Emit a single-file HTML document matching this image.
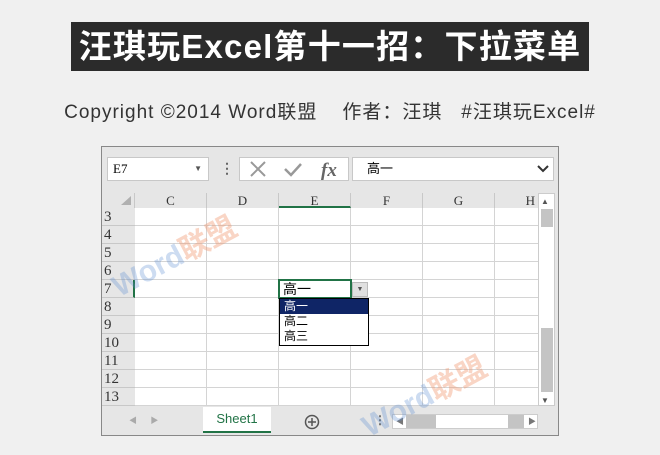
<!DOCTYPE html>
<html><head><meta charset="utf-8"><style>
*{margin:0;padding:0;box-sizing:border-box}
body{width:660px;height:455px;background:#f0f0f0;position:relative;overflow:hidden;font-family:"Liberation Sans","Noto Sans CJK SC",sans-serif}
.a{position:absolute}
.title{left:71px;top:22px;width:518px;height:49px;background:#2b2b2b;color:#fff;font-weight:bold;font-size:33px;line-height:49px;text-align:center;white-space:nowrap;letter-spacing:1.2px}
.sub{left:0;top:97px;width:660px;text-align:center;font-size:19px;color:#333;white-space:nowrap;letter-spacing:1px}
.win{left:101px;top:146px;width:458px;height:290px;background:#e6e6e6;border:1px solid #888}
.box{background:#fff;border:1px solid #c8c8c8}
.mono{font-family:"Liberation Serif","Noto Serif CJK SC",serif}
.hc{top:193px;height:15px;background:#e6e6e6;font-size:13px;text-align:center;line-height:15px;border-right:1px solid #c8c8c8;font-family:"Liberation Serif",serif;color:#333}
.rh{left:102px;width:33px;height:18px;font-size:15px;line-height:18px;padding-left:2px;background:#e6e6e6;border-bottom:1px solid #c8c8c8;font-family:"Liberation Serif",serif;color:#333}
.wm{font-weight:bold;color:rgba(90,140,210,.3);font-size:30px;transform:rotate(-28deg);white-space:nowrap}
.wm span{color:rgba(240,150,110,.4)}
</style></head><body>
<div class="a title">汪琪玩Excel第十一招：下拉菜单</div>
<div class="a sub">Copyright ©2014 Word联盟&nbsp;&nbsp;&nbsp;&nbsp;作者：汪琪&nbsp;&nbsp;&nbsp;#汪琪玩Excel#</div>
<div class="a win"></div>
<div class="a box" style="left:107px;top:157px;width:102px;height:24px;font-size:13px;line-height:22px;padding-left:5px"><span class="mono">E7</span><span class="a" style="right:6px;top:0;font-size:8px;color:#555">▼</span></div>
<div class="a" style="left:220px;top:160px;color:#666;font-size:14px;font-weight:bold">⋮</div>
<div class="a box" style="left:239px;top:157px;width:110px;height:24px"></div>
<svg class="a" style="left:239px;top:157px" width="110" height="24"><path d="M12 5l14 14M26 5L12 19" stroke="#999" stroke-width="2" fill="none"/><path d="M46 12l6 6 10-11" stroke="#999" stroke-width="2.5" fill="none"/><text x="82" y="19" font-family="Liberation Serif" font-style="italic" font-weight="bold" font-size="19" fill="#666">fx</text></svg>
<div class="a box" style="left:352px;top:157px;width:202px;height:24px;font-size:13px;line-height:22px;padding-left:14px">高一<svg class="a" style="right:4px;top:7px" width="12" height="8"><path d="M1 1l5 5 5-5" stroke="#333" stroke-width="2" fill="none"/></svg></div>
<div class="a" style="left:135px;top:208px;width:403px;height:198px;background:#fff;
background-image:linear-gradient(#d4d4d4 1px,transparent 1px),linear-gradient(90deg,#d4d4d4 1px,transparent 1px);background-size:100% 18px,72px 100%;background-position:0 17px,71px 0"></div>
<div class="a" style="left:102px;top:193px;width:33px;height:15px;background:#e6e6e6;border-right:1px solid #c8c8c8"></div>
<svg class="a" style="left:120px;top:196px" width="12" height="10"><path d="M11 0L11 9 1 9z" fill="#b0b0b0"/></svg>
<div class="a hc" style="left:135px;width:72px">C</div>
<div class="a hc" style="left:207px;width:72px">D</div>
<div class="a hc" style="left:279px;width:72px;border-bottom:2px solid #217346">E</div>
<div class="a hc" style="left:351px;width:72px">F</div>
<div class="a hc" style="left:423px;width:72px">G</div>
<div class="a hc" style="left:495px;width:43px;text-align:right;padding-right:3px;border:none">H</div>
<div class="a rh" style="top:208px">3</div><div class="a rh" style="top:226px">4</div><div class="a rh" style="top:244px">5</div><div class="a rh" style="top:262px">6</div><div class="a rh" style="top:280px;border-right:2px solid #217346">7</div><div class="a rh" style="top:298px">8</div><div class="a rh" style="top:316px">9</div><div class="a rh" style="top:334px">10</div><div class="a rh" style="top:352px">11</div><div class="a rh" style="top:370px">12</div><div class="a rh" style="top:388px">13</div>
<div class="a" style="left:538px;top:193px;width:17px;height:213px;background:#fff;border:1px solid #ccc"></div>
<div class="a" style="left:541px;top:197px;font-size:8px;color:#555">▲</div>
<div class="a" style="left:541px;top:209px;width:12px;height:18px;background:#c4c4c4"></div>
<div class="a" style="left:541px;top:328px;width:12px;height:64px;background:#c4c4c4"></div>
<div class="a" style="left:541px;top:396px;font-size:8px;color:#555">▼</div>
<div class="a" style="left:278px;top:279px;width:74px;height:20px;border:2px solid #217346;background:#fff;font-size:14px;line-height:16px;padding-left:3px">高一</div>
<div class="a" style="left:352px;top:282px;width:16px;height:15px;background:#e0e0e0;border:1px solid #bbb;font-size:7px;text-align:center;line-height:13px;color:#555">▼</div>
<div class="a" style="left:279px;top:298px;width:90px;height:48px;border:1px solid #000;background:#fff;font-size:12px;line-height:15px">
<div style="background:#0f2566;color:#fff;padding-left:4px">高一</div><div style="padding-left:4px">高二</div><div style="padding-left:4px">高三</div></div>
<div class="a" style="left:129px;top:415px;font-size:8px;color:#aaa">◀&nbsp;&nbsp;&nbsp;&nbsp;&nbsp;&nbsp;▶</div>
<div class="a" style="left:203px;top:407px;width:68px;height:26px;background:#fff;border-bottom:2px solid #217346;color:#217346;font-size:13px;text-align:center;line-height:24px">Sheet1</div>
<svg class="a" style="left:304px;top:414px" width="16" height="16"><circle cx="8" cy="8" r="6.5" stroke="#555" stroke-width="1.5" fill="none"/><path d="M8 4v8M4 8h8" stroke="#555" stroke-width="1.5"/></svg>
<div class="a" style="left:374px;top:413px;color:#666;font-size:12px;font-weight:bold">⋮</div>
<div class="a" style="left:392px;top:414px;width:146px;height:15px;background:#fff;border:1px solid #ccc"></div>
<div class="a" style="left:406px;top:415px;width:30px;height:13px;background:#c4c4c4"></div>
<div class="a" style="left:508px;top:415px;width:16px;height:13px;background:#c4c4c4"></div>
<div class="a" style="left:396px;top:416px;font-size:8px;color:#777">◀</div>
<div class="a" style="left:528px;top:416px;font-size:8px;color:#777">▶</div>
<div class="a wm" style="left:105px;top:232px">Word<span>联盟</span></div>
<div class="a wm" style="left:355px;top:372px">Word<span>联盟</span></div>
</body></html>
